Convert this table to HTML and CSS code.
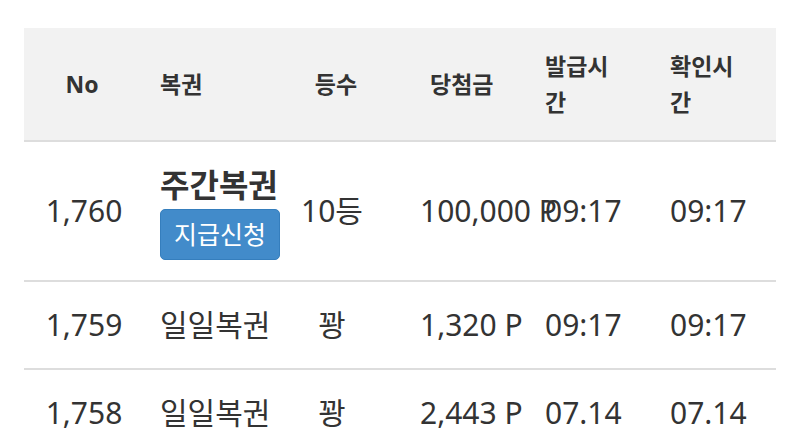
FILE: index.html
```html
<!DOCTYPE html>
<html lang="ko">
<head>
<meta charset="utf-8">
<title>당첨 내역</title>
<link rel="stylesheet" href="styles.css">
</head>
<body>
<table class="list">
  <colgroup>
    <col class="c-no">
    <col class="c-kind">
    <col class="c-rank">
    <col class="c-prize">
    <col class="c-issue">
    <col class="c-check">
  </colgroup>
  <thead>
    <tr>
      <th class="center no-head">No</th>
      <th>복권</th>
      <th class="center rank-head">등수</th>
      <th class="prize-head">당첨금</th>
      <th>발급시간</th>
      <th>확인시간</th>
    </tr>
  </thead>
  <tbody>
    <tr>
      <td class="center">1,760</td>
      <td class="kind"><strong class="kind-name">주간복권</strong><span class="btn-claim">지급신청</span></td>
      <td class="center">10등</td>
      <td>100,000 P</td>
      <td>09:17</td>
      <td>09:17</td>
    </tr>
    <tr>
      <td class="center">1,759</td>
      <td>일일복권</td>
      <td class="center">꽝</td>
      <td>1,320 P</td>
      <td>09:17</td>
      <td>09:17</td>
    </tr>
    <tr>
      <td class="center">1,758</td>
      <td>일일복권</td>
      <td class="center">꽝</td>
      <td>2,443 P</td>
      <td>07.14</td>
      <td>07.14</td>
    </tr>
  </tbody>
</table>
</body>
</html>
```

FILE: styles.css
```css
html, body {
  background: #ffffff;
}
body {
  margin: 28px 24px 0 24px;
  font-family: "Noto Sans", "Noto Sans CJK KR", sans-serif;
  color: #333333;
}
.list {
  width: 752px;
  border-collapse: collapse;
  table-layout: fixed;
}
.c-no { width: 120px; }
.c-kind { width: 116px; }
.c-rank { width: 144px; }
.c-prize { width: 125px; }
.c-issue { width: 125px; }
.c-check { width: 122px; }

.list th {
  background: #f2f2f2;
  font-size: 23px;
  font-weight: 700;
  line-height: 36px;
  text-align: left;
  padding: 20px 30px 20px 16px;
  border-bottom: 2px solid #dddddd;
  vertical-align: middle;
}
.list td {
  font-size: 30px;
  line-height: 46px;
  text-align: left;
  padding: 20px 0 20px 16px;
  border-bottom: 2px solid #dddddd;
  vertical-align: middle;
  white-space: nowrap;
}
.list .center {
  text-align: center;
  padding-left: 0;
  padding-right: 0;
}
.list th.no-head {
  padding-right: 4px;
}
.list th.rank-head {
  padding-left: 8px;
}
.list .prize-head {
  padding-left: 26px;
  padding-right: 0;
}
.kind-name {
  display: block;
  font-size: 32px;
  font-weight: 700;
}
.btn-claim {
  display: inline-block;
  margin-top: 1px;
  height: 51px;
  box-sizing: border-box;
  padding: 0 13px;
  background: #428bca;
  border: 1px solid #357ebd;
  border-radius: 5px;
  color: #ffffff;
  font-size: 25px;
  line-height: 48px;
}
```
